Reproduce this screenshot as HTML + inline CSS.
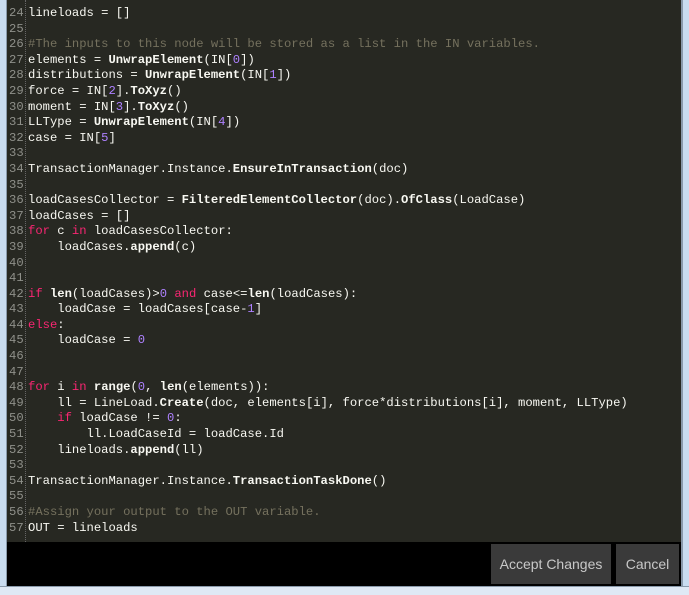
<!DOCTYPE html>
<html><head><meta charset="utf-8"><style>
body{margin:0;width:689px;height:594px;background:#c9dcf0;position:relative;overflow:hidden;font-family:"Liberation Mono",monospace}
#ed{position:absolute;left:7px;top:0;width:674px;height:542px;background:#272822}
#rb{position:absolute;left:681px;top:0;width:2px;height:594px;background:#8a9aab}
#lb{position:absolute;left:6px;top:0;width:1px;height:594px;background:#8a9aab}
#bar{position:absolute;left:7px;top:542px;width:674px;height:44px;background:#000}
#bb{position:absolute;left:0;top:586px;width:689px;height:8px;background:#dfe9f5;border-top:1px solid #8a9aab}
#gut{position:absolute;left:25px;top:0;height:542px;border-left:1px dotted #666}
pre{position:absolute;top:6px;margin:0;font-size:12.2px;line-height:15.6px;color:#f8f8f2;font-family:"Liberation Mono",monospace}
#nums{left:9px;color:#8f908a}
#code{left:28px}
.k{color:#f92672}.d{color:#ae81ff}.c{color:#75715e}b{font-weight:bold}
.btn{position:absolute;top:544px;height:40px;background:#3a3a3a;color:#c8c8c8;font:14px "Liberation Sans",sans-serif;display:flex;align-items:center;justify-content:center}
</style></head><body>
<div id="ed"></div><div id="gut"></div><div id="lb"></div>
<pre id="nums">24
25
26
27
28
29
30
31
32
33
34
35
36
37
38
39
40
41
42
43
44
45
46
47
48
49
50
51
52
53
54
55
56
57</pre>
<pre id="code">lineloads = []

<span class="c">#The inputs to this node will be stored as a list in the IN variables.</span>
elements = <b>UnwrapElement</b>(IN[<span class="d">0</span>])
distributions = <b>UnwrapElement</b>(IN[<span class="d">1</span>])
force = IN[<span class="d">2</span>].<b>ToXyz</b>()
moment = IN[<span class="d">3</span>].<b>ToXyz</b>()
LLType = <b>UnwrapElement</b>(IN[<span class="d">4</span>])
case = IN[<span class="d">5</span>]

TransactionManager.Instance.<b>EnsureInTransaction</b>(doc)

loadCasesCollector = <b>FilteredElementCollector</b>(doc).<b>OfClass</b>(LoadCase)
loadCases = []
<span class="k">for</span> c <span class="k">in</span> loadCasesCollector:
    loadCases.<b>append</b>(c)


<span class="k">if</span> <b>len</b>(loadCases)&gt;<span class="d">0</span> <span class="k">and</span> case&lt;=<b>len</b>(loadCases):
    loadCase = loadCases[case-<span class="d">1</span>]
<span class="k">else</span>:
    loadCase = <span class="d">0</span>


<span class="k">for</span> i <span class="k">in</span> <b>range</b>(<span class="d">0</span>, <b>len</b>(elements)):
    ll = LineLoad.<b>Create</b>(doc, elements[i], force*distributions[i], moment, LLType)
    <span class="k">if</span> loadCase != <span class="d">0</span>:
        ll.LoadCaseId = loadCase.Id
    lineloads.<b>append</b>(ll)

TransactionManager.Instance.<b>TransactionTaskDone</b>()

<span class="c">#Assign your output to the OUT variable.</span>
OUT = lineloads</pre>
<div id="bar"></div>
<div class="btn" style="left:491px;width:120px">Accept Changes</div>
<div class="btn" style="left:616px;width:63px">Cancel</div>
<div id="rb"></div><div id="bb"></div>
</body></html>
